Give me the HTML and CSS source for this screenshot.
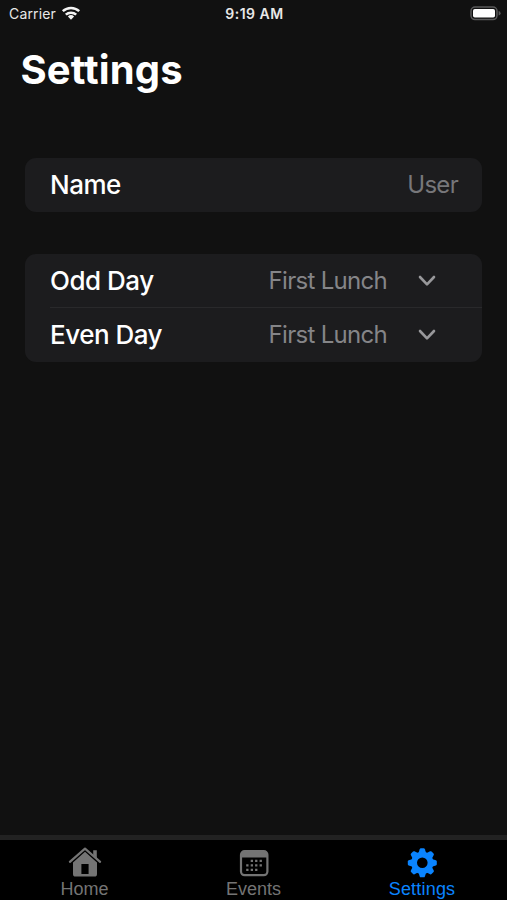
FILE: index.html
```html
<!DOCTYPE html>
<html lang="en">
<head>
<meta charset="utf-8">
<title>Settings</title>
<link rel="stylesheet" href="styles.css">
</head>
<body>
<div class="screen">
  <header class="status">
    <div class="carrier"><span>Carrier</span>
      <svg class="wifi" width="20" height="16" viewBox="0 0 20 16"><g fill="none" stroke="#f4f4f4" stroke-width="2.5"><path d="M1.8 6.2a12 12 0 0 1 16.4 0"/><path d="M4.8 9.7a7.6 7.6 0 0 1 10.4 0"/></g><path d="M6.9 11.5a4.6 4.6 0 0 1 6.2 0L10 14.7z" fill="#f4f4f4"/></svg>
    </div>
    <div class="time">9:19 AM</div>
    <svg class="battery" width="31" height="15" viewBox="0 0 31 15"><rect x="1" y="1" width="26" height="12.6" rx="4" fill="none" stroke="#59595a" stroke-width="1.5"/><rect x="3" y="3" width="22" height="8.6" rx="1.8" fill="#fff"/><path d="M28.6 5q2 .6 2 2.3t-2 2.3z" fill="#59595a"/></svg>
  </header>
  <h1 class="title">Settings</h1>
  <main class="groups">
    <section class="card">
      <div class="row"><span class="label">Name</span><span class="value">User</span></div>
    </section>
    <section class="card">
      <div class="row"><span class="label">Odd Day</span><span class="value lunch">First Lunch</span>
        <svg class="chevron" width="18" height="12" viewBox="0 0 18 12"><path d="M2 2l7 7.4L16 2"/></svg></div>
      <div class="row divided"><span class="label">Even Day</span><span class="value lunch">First Lunch</span>
        <svg class="chevron" width="18" height="12" viewBox="0 0 18 12"><path d="M2 2l7 7.4L16 2"/></svg></div>
    </section>
  </main>
  <nav class="tabs">
    <div class="tab">
      <svg width="34" height="32" viewBox="0 0 34 32"><path d="M25.2 4.2h3.6v8.4L25.2 9z" fill="currentColor"/><path d="M1.9 15.8 17 2.6l15.1 13.2" fill="none" stroke="currentColor" stroke-width="2.2" stroke-linecap="round" stroke-linejoin="round"/><path fill-rule="evenodd" d="M17 5.8 29 16.4V28a2.6 2.6 0 0 1-2.6 2.6H7.6A2.6 2.6 0 0 1 5 28V16.4zM13.4 18v10h7.2V18z" fill="currentColor"/></svg>
      <span>Home</span>
    </div>
    <div class="tab">
      <svg width="34" height="32" viewBox="0 0 34 32"><rect x="4" y="5.2" width="26.4" height="24" rx="3.6" fill="none" stroke="currentColor" stroke-width="2.2"/><path d="M4 11.4V8q0-3 3-3h20.4q3 0 3 3v3.4z" fill="currentColor"/><g fill="currentColor"><path d="M13.7 13.8h2.3v2.3h-2.3zm4.4 0h2.3v2.3h-2.3zm4.5 0h2.3v2.3h-2.3zM9.2 18.3h2.3v2.3H9.2zm4.5 0h2.3v2.3h-2.3zm4.4 0h2.3v2.3h-2.3zm4.5 0h2.3v2.3h-2.3zM9.2 22.8h2.3v2.3H9.2zm4.5 0h2.3v2.3h-2.3zm4.4 0h2.3v2.3h-2.3z"/></g></svg>
      <span>Events</span>
    </div>
    <div class="tab active">
      <svg width="34" height="32" viewBox="0 0 34 32"><defs><path id="tooth" d="M-3.9-9.5-2.6-13.6Q-2.3-14.5-1.4-14.5H1.4Q2.3-14.5 2.6-13.6L3.9-9.5z"/></defs><g transform="translate(16.3 16.8)" fill="currentColor"><circle r="8.2" fill="none" stroke="currentColor" stroke-width="5.8"/><use href="#tooth"/><use href="#tooth" transform="rotate(45)"/><use href="#tooth" transform="rotate(90)"/><use href="#tooth" transform="rotate(135)"/><use href="#tooth" transform="rotate(180)"/><use href="#tooth" transform="rotate(225)"/><use href="#tooth" transform="rotate(270)"/><use href="#tooth" transform="rotate(315)"/></g></svg>
      <span class="wide">Settings</span>
    </div>
  </nav>
</div>
</body>
</html>
```
FILE: styles.css
```css
* { box-sizing: border-box; }
body { margin: 0; background: #111; color: #fff; font-family: Inter, "Liberation Sans", sans-serif; }
.screen { width: 507px; height: 900px; display: flex; flex-direction: column; overflow: hidden; }
.status { height: 28px; padding: 0 6px 0 9px; display: grid; grid-template-columns: 1fr auto 1fr; color: #e8e8e8; font-size: 14px; line-height: 28px; }
.carrier { display: flex; gap: 5px; letter-spacing: 0.15px; }
.wifi { margin-top: 5px; }
.time { font-weight: 600; letter-spacing: 0.5px; margin-right: 1px; }
.battery { justify-self: end; margin-top: 6px; }
.title { margin: 18px 0 0 20.5px; font-size: 40px; line-height: 48px; font-weight: 700; letter-spacing: 0.1px; }
.groups { flex: 1; padding: 64px 25px 0; display: flex; flex-direction: column; gap: 42px; }
.card { background: #1c1c1e; border-radius: 11px; }
.row { height: 54px; padding: 0 24px 0 25px; display: flex; align-items: center; font-size: 26px; position: relative; }
.divided::before { content: ""; position: absolute; top: -1px; left: 25px; right: 0; height: 1px; background: #29292b; }
.label { flex: 1; font-weight: 540; letter-spacing: -0.5px; line-height: 32px; }
.value { color: #77777a; font-weight: 400; font-size: 24px; letter-spacing: -0.7px; line-height: 28px; padding-bottom: 1px; }
.lunch { color: #858588; margin-right: 31px; }
.chevron { margin-right: 22px; fill: none; stroke: #98989b; stroke-width: 2.6; stroke-linecap: round; stroke-linejoin: round; }
.tabs { height: 65px; border-top: 5px solid #222; background: #000; display: grid; grid-template-columns: repeat(3, 169px); color: #747474; }
.tab { display: flex; flex-direction: column; align-items: center; padding-top: 6px; font: 18px/20px "Liberation Sans", sans-serif; }
.tab svg { flex: none; }
.tab span { margin-top: 1px; }
.active { color: #0a84ff; }
.wide { letter-spacing: 0.2px; margin-right: 1px; }
```
